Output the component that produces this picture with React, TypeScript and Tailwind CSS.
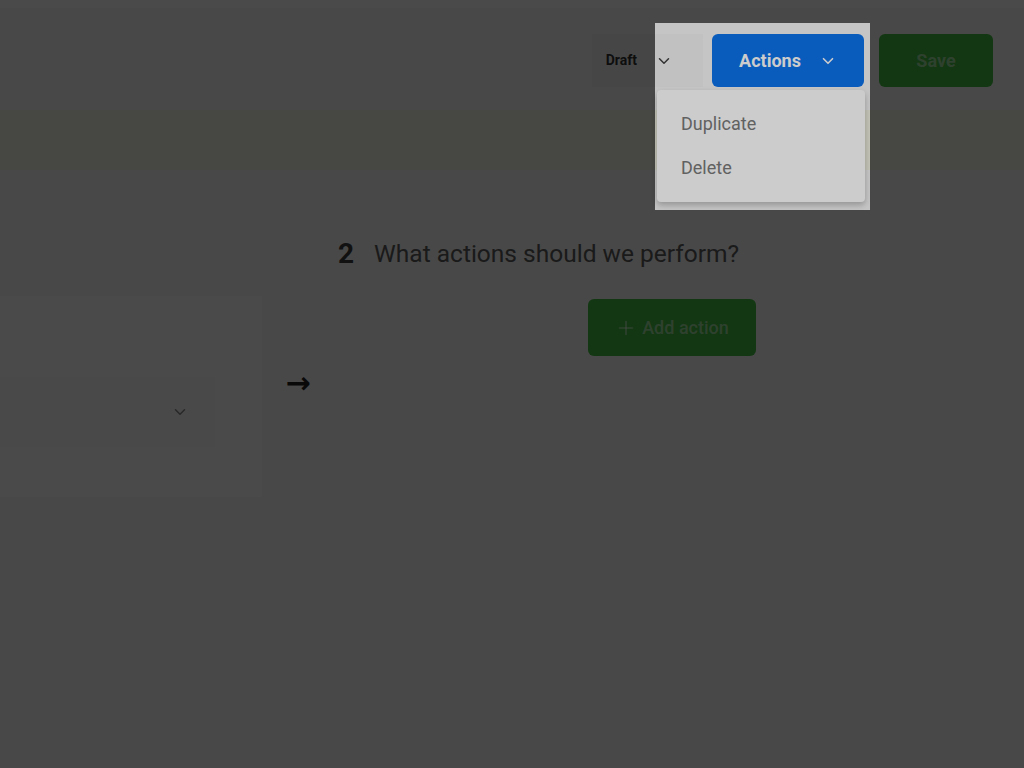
import { ChevronDown, Plus } from 'lucide-react';

function DraftSelect() {
  return (
    <div className="flex items-center h-[53px] pl-[14px] pr-[30px] gap-[18px] bg-[#f2f2f2]">
      <span className="text-[14px] font-bold text-[#333]">Draft</span>
      <ChevronDown size={18} strokeWidth={2} className="text-[#3f3f3f]" />
    </div>
  );
}

function ActionsMenu() {
  return (
    <div className="relative ml-[9px]">
      <button className="flex items-center justify-center gap-[18px] w-[152px] h-[53px] rounded-md bg-[#0c72ec] text-white text-[18px] font-bold">
        <span>Actions</span>
        <ChevronDown size={18} strokeWidth={2.2} />
      </button>
      <div className="absolute right-[-1px] top-full mt-[3px] w-[208px] pt-[11px] pb-[13px] rounded bg-white shadow-[0_3px_6px_rgba(0,0,0,0.25)]">
        <div className="h-[44px] flex items-center px-[24px] text-[18px] text-[#7a7a7a]">Duplicate</div>
        <div className="h-[44px] flex items-center px-[24px] text-[18px] text-[#7a7a7a]">Delete</div>
      </div>
    </div>
  );
}

export default function App() {
  return (
    <div className="relative w-full h-[768px] overflow-hidden bg-[#f7f7f7] font-['Roboto',sans-serif]">
      <div className="h-2 bg-white" />

      <header className="flex justify-end items-center pt-[26px] pr-[31px]">
        <DraftSelect />
        <ActionsMenu />
        <button className="ml-[15px] w-[114px] h-[53px] rounded-md bg-[#40bd40] text-white/50 text-[18px] font-bold">
          Save
        </button>
      </header>

      <div className="mt-[23px] h-[60px] bg-[#f5f5e6]" />

      <main className="mt-[68px] grid grid-cols-[262px_76px_418px] gap-y-[26px]">
        <div />
        <div />
        <h2 className="flex gap-[20px] h-[32px] items-center">
          <span className="text-[28px] font-bold text-[#3c3c3c]">2</span>
          <span className="text-[24.5px] text-[#5c5c5c]">What actions should we perform?</span>
        </h2>

        <div className="h-[201px] bg-white pt-[81px] pr-[47px]">
          <div className="h-[70px] bg-[#fafafa] flex items-center justify-end pr-[26px]">
            <ChevronDown size={18} strokeWidth={2} className="text-[#8a8a8a]" />
          </div>
        </div>
        <div className="flex justify-center pt-[74px] pr-[4px]">
          <span className="text-[30px] leading-[26px] font-bold text-[#222] font-['DejaVu_Sans',sans-serif]">→</span>
        </div>
        <div className="flex justify-end items-start pt-[3px]">
          <button className="flex items-center gap-[5px] w-[168px] h-[57px] justify-center rounded-md bg-[#40bd40] text-white/50 text-[18px] font-medium">
            <Plus size={22} strokeWidth={1.8} />
            <span>Add action</span>
          </button>
        </div>
      </main>

      <div className="absolute inset-0 pointer-events-none">
        <div className="absolute left-[655px] top-[23px] w-[215px] h-[187px] bg-black/20 shadow-[0_0_0_2000px_rgba(0,0,0,0.71)]" />
      </div>
    </div>
  );
}
